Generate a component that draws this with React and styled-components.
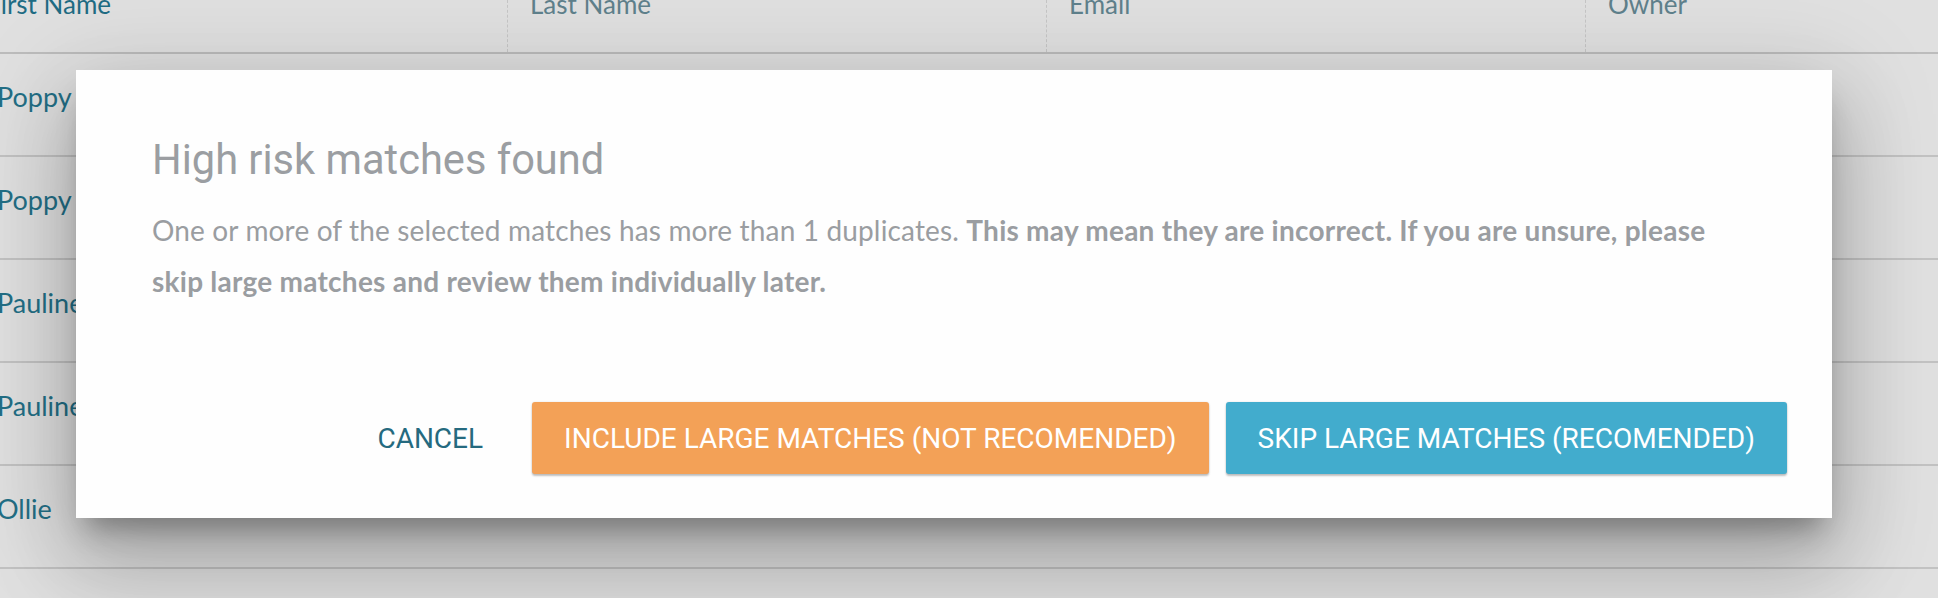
import React from 'react';
import styled, { createGlobalStyle } from 'styled-components';

const GlobalStyle = createGlobalStyle`
  html, body {
    margin: 0;
    padding: 0;
    background: #e0e0e0;
    overflow: hidden;
  }
  * {
    box-sizing: border-box;
  }
`;

const Page = styled.div`
  position: relative;
  width: 1938px;
  height: 598px;
  overflow: hidden;
  background: #e0e0e0;
`;

const Table = styled.div`
  display: flex;
  flex-direction: column;
  margin-left: -36px;
`;

const HeaderRow = styled.div`
  display: grid;
  grid-template-columns: 544px 539px 539px 1fr;
  height: 54px;
  border-bottom: 2px solid #bcbcbc;
`;

const HeaderCell = styled.div`
  padding-left: 22px;
  border-right: ${(props) => (props.last ? 'none' : '1px dashed #c6c6c6')};
  font-family: Lato, 'Open Sans', sans-serif;
  font-size: 26px;
  line-height: 31px;
  color: ${(props) => (props.active ? '#1f6c84' : '#5f818c')};
  white-space: nowrap;

  span {
    display: block;
    margin-top: -11px;
  }
`;

const Row = styled.div`
  display: flex;
  align-items: center;
  height: 103px;
  border-bottom: 2px solid #c2c2c2;
  padding-left: 33px;
  padding-bottom: 16px;
`;

const Name = styled.span`
  font-family: Lato, 'Open Sans', sans-serif;
  font-size: 27px;
  color: #236f86;
`;

const Modal = styled.div`
  position: absolute;
  top: 70px;
  left: 76px;
  width: 1756px;
  height: 448px;
  background: #fefefe;
  display: flex;
  flex-direction: column;
  padding: 66px 45px 44px 76px;
  box-shadow:
    0 20px 26px -10px rgba(0, 0, 0, 0.3),
    0 48px 76px 6px rgba(0, 0, 0, 0.17),
    0 18px 92px 16px rgba(0, 0, 0, 0.13);
`;

const Title = styled.h2`
  margin: 0;
  font-family: Roboto, 'Liberation Sans', sans-serif;
  font-weight: 400;
  font-size: 41.6px;
  line-height: 48px;
  color: #9b9ea2;
`;

const Body = styled.p`
  margin: 21px 0 0;
  max-width: 1585px;
  font-family: Lato, 'Open Sans', sans-serif;
  font-size: 28px;
  letter-spacing: 0.15px;
  line-height: 51px;
  color: #9a9da1;

  strong {
    font-weight: 700;
    letter-spacing: 0.25px;
  }
`;

const Actions = styled.div`
  margin-top: auto;
  display: flex;
  justify-content: flex-end;
  gap: 17px;
`;

const Button = styled.button`
  height: 72px;
  padding: 0 32px;
  border: none;
  border-radius: 3px;
  font-family: Roboto, 'Liberation Sans', sans-serif;
  font-size: 28px;
  font-weight: 400;
  text-transform: uppercase;
  cursor: pointer;
  white-space: nowrap;
  background: ${(props) => props.bg || 'transparent'};
  color: ${(props) => props.fg || '#fff'};
  box-shadow: ${(props) => (props.flat ? 'none' : '0 2px 2px rgba(0, 0, 0, 0.24), 0 0 2px rgba(0, 0, 0, 0.12)')};
`;

const columns = [
  { label: 'First Name', active: true },
  { label: 'Last Name' },
  { label: 'Email' },
  { label: 'Owner', last: true },
];

const names = ['Poppy', 'Poppy', 'Pauline', 'Pauline', 'Ollie'];

const App = () => (
  <Page>
    <GlobalStyle />
    <Table>
      <HeaderRow>
        {columns.map((col) => (
          <HeaderCell key={col.label} active={col.active} last={col.last}>
            <span>{col.label}</span>
          </HeaderCell>
        ))}
      </HeaderRow>
      {names.map((name, i) => (
        <Row key={`${name}-${i}`}>
          <Name>{name}</Name>
        </Row>
      ))}
    </Table>
    <Modal>
      <Title>High risk matches found</Title>
      <Body>
        One or more of the selected matches has more than 1 duplicates.{' '}
        <strong>
          This may mean they are incorrect. If you are unsure, please skip large matches and review them individually later.
        </strong>
      </Body>
      <Actions>
        <Button flat fg="#256a7f">Cancel</Button>
        <Button bg="#f3a157">Include large matches (not recomended)</Button>
        <Button bg="#42accd">Skip large matches (recomended)</Button>
      </Actions>
    </Modal>
  </Page>
);

export default App;
